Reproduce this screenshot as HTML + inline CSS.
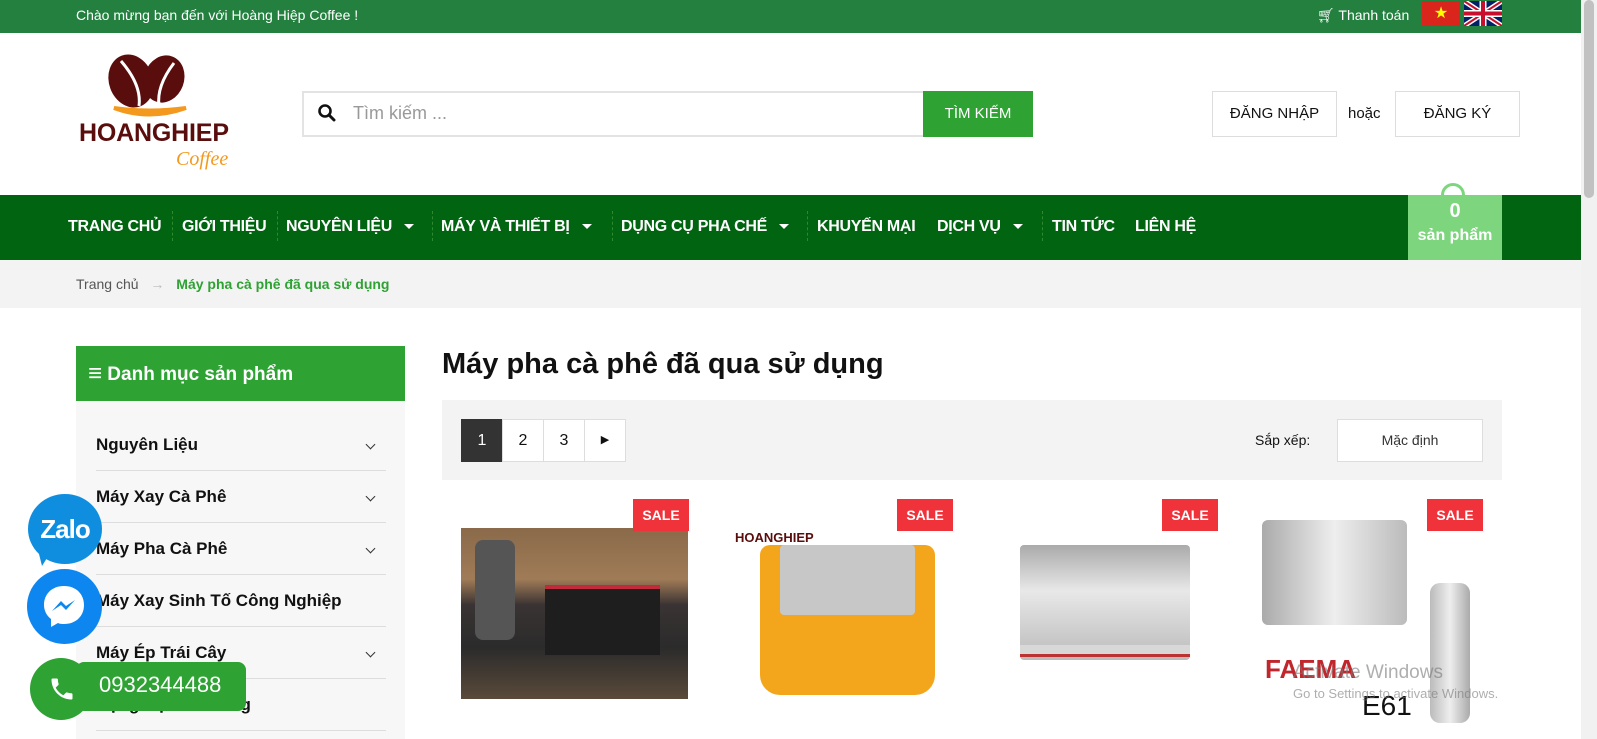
<!DOCTYPE html>
<html><head><meta charset="utf-8"><style>
*{margin:0;padding:0;box-sizing:border-box}
body{width:1597px;height:739px;overflow:hidden;position:relative;background:#fff;font-family:"Liberation Sans",Arial,sans-serif;color:#111}
.a{position:absolute}
.nav span{position:absolute;top:218px;color:#fff;font-weight:bold;font-size:16px;white-space:nowrap;letter-spacing:-0.3px}
.sep{position:absolute;top:211px;height:30px;border-left:1px dashed #2f8a2f}
.car{display:inline-block;width:0;height:0;border-left:5px solid transparent;border-right:5px solid transparent;border-top:5px solid #fff;margin-left:12px;vertical-align:middle}
.side div.it{position:absolute;left:96px;width:290px;height:52px;border-bottom:1px solid #ddd;font-weight:bold;font-size:17px;line-height:52px}
.chev{position:absolute;right:12px;top:22px;width:7px;height:7px;border-right:1.5px solid #333;border-bottom:1.5px solid #333;transform:rotate(45deg)}
.pg{position:absolute;top:419px;width:42px;height:43px;border:1px solid #ddd;background:#fff;text-align:center;line-height:41px;font-size:16px}
.sale{position:absolute;top:499px;width:56px;height:32px;background:#f0333a;color:#fff;font-weight:bold;font-size:14px;text-align:center;line-height:32px}
</style></head><body>
<div class="a" style="left:0;top:0;width:1581px;height:33px;background:#23803f"></div>
<div class="a" style="left:76px;top:7px;color:#fff;font-size:14px">Chào mừng bạn đến với Hoàng Hiệp Coffee !</div>
<div class="a" style="left:1317px;top:7px;color:#fff;font-size:14px">&#128722;&#xFE0E; Thanh toán</div>
<div class="a" style="left:1422px;top:1px;width:38px;height:25px;background:#da251d;color:#ff0;text-align:center;font-size:16px;line-height:25px">★</div>
<svg class="a" style="left:1464px;top:1px" width="38" height="25" viewBox="0 0 38 25"><rect width="38" height="25" fill="#012169"/><path d="M0 0L38 25M38 0L0 25" stroke="#fff" stroke-width="5"/><path d="M0 0L38 25M38 0L0 25" stroke="#c8102e" stroke-width="2"/><path d="M19 0V25M0 12.5H38" stroke="#fff" stroke-width="7"/><path d="M19 0V25M0 12.5H38" stroke="#c8102e" stroke-width="4"/></svg>
<div class="a" style="left:1581px;top:0;width:16px;height:739px;background:#f1f1f1"></div>
<div class="a" style="left:1584px;top:0;width:10px;height:198px;background:#c1c1c1;border-radius:5px"></div>
<svg class="a" style="left:79px;top:51px" width="155" height="122" viewBox="0 0 155 122">
<ellipse cx="52" cy="30" rx="22" ry="27" fill="#5a0d0d" transform="rotate(-20 52 30)"/>
<ellipse cx="85" cy="28" rx="20" ry="24" fill="#5a0d0d" transform="rotate(20 85 28)"/>
<path d="M42 10C55 25 62 40 60 55" stroke="#fff" stroke-width="3" fill="none"/>
<path d="M95 12C85 25 78 40 80 55" stroke="#fff" stroke-width="3" fill="none"/>
<path d="M35 57Q70 70 107 57Q70 62 35 57Z" fill="#f39a1e" stroke="#f39a1e" stroke-width="4"/>
<text x="0" y="90" font-family="Liberation Sans" font-weight="bold" font-size="25" fill="#5a0d0d" textLength="150">HOANGHIEP</text>
<text x="97" y="114" font-family="Liberation Serif" font-style="italic" font-size="20" fill="#f39a1e">Coffee</text>
</svg>
<div class="a" style="left:302px;top:91px;width:731px;height:46px;border:2px solid #e3e3e3;background:#fff"></div>
<svg class="a" style="left:318px;top:104px" width="18" height="18" viewBox="0 0 18 18"><circle cx="7" cy="7" r="5.5" stroke="#111" stroke-width="2.6" fill="none"/><path d="M11 11L16 16" stroke="#111" stroke-width="3" stroke-linecap="round"/></svg>
<div class="a" style="left:353px;top:103px;font-size:18px;color:#999">Tìm kiếm ...</div>
<div class="a" style="left:923px;top:91px;width:110px;height:46px;background:#2ea233;color:#fff;font-size:15px;text-align:center;line-height:46px">TÌM KIẾM</div>
<div class="a" style="left:1212px;top:91px;width:125px;height:46px;border:1px solid #ddd;text-align:center;line-height:44px;font-size:15px">ĐĂNG NHẬP</div>
<div class="a" style="left:1348px;top:105px;font-size:15px">hoặc</div>
<div class="a" style="left:1395px;top:91px;width:125px;height:46px;border:1px solid #ddd;text-align:center;line-height:44px;font-size:15px">ĐĂNG KÝ</div>
<div class="a" style="left:0;top:195px;width:1581px;height:65px;background:#006410"></div>
<div class="nav">
<span style="left:68px">TRANG CHỦ</span><div class="sep" style="left:172px"></div>
<span style="left:182px">GIỚI THIỆU</span><div class="sep" style="left:277px"></div>
<span style="left:286px">NGUYÊN LIỆU<i class="car"></i></span><div class="sep" style="left:432px"></div>
<span style="left:441px">MÁY VÀ THIẾT BỊ<i class="car"></i></span><div class="sep" style="left:612px"></div>
<span style="left:621px">DỤNG CỤ PHA CHẾ<i class="car"></i></span><div class="sep" style="left:807px"></div>
<span style="left:817px">KHUYẾN MẠI</span>
<span style="left:937px">DỊCH VỤ<i class="car"></i></span><div class="sep" style="left:1042px"></div>
<span style="left:1052px">TIN TỨC</span>
<span style="left:1135px">LIÊN HỆ</span>
</div>
<div class="a" style="left:1441px;top:183px;width:24px;height:24px;border:3px solid #7dd67d;border-radius:50%"></div>
<div class="a" style="left:1408px;top:195px;width:94px;height:65px;background:#7dd67d;color:#fff;text-align:center;font-weight:bold"><div style="font-size:20px;margin-top:5px">0</div><div style="font-size:16px;margin-top:4px">sản phẩm</div></div>
<div class="a" style="left:0;top:260px;width:1581px;height:48px;background:#f3f3f3"></div>
<div class="a" style="left:76px;top:276px;font-size:14px;color:#555">Trang chủ <span style="color:#bbb;margin:0 8px">→</span> <b style="color:#2ea233">Máy pha cà phê đã qua sử dụng</b></div>
<div class="a" style="left:76px;top:346px;width:329px;height:55px;background:#2ea233;color:#fff;font-weight:bold;font-size:19px;line-height:55px;padding-left:12px"><span style="font-size:24px;vertical-align:-1px">&#8801;</span> Danh mục sản phẩm</div>
<div class="a" style="left:76px;top:401px;width:329px;height:338px;background:#f7f7f7"></div>
<div class="side">
<div class="it" style="top:419px">Nguyên Liệu<span class="chev"></span></div>
<div class="it" style="top:471px">Máy Xay Cà Phê<span class="chev"></span></div>
<div class="it" style="top:523px">Máy Pha Cà Phê<span class="chev"></span></div>
<div class="it" style="top:575px">Máy Xay Sinh Tố Công Nghiệp</div>
<div class="it" style="top:627px">Máy Ép Trái Cây<span class="chev"></span></div>
<div class="it" style="top:679px">Dụng Cụ Pha Đồng</div>
</div>
<div class="a" style="left:442px;top:348px;font-size:29px;font-weight:bold">Máy pha cà phê đã qua sử dụng</div>
<div class="a" style="left:442px;top:400px;width:1060px;height:80px;background:#f3f3f3"></div>
<div class="pg" style="left:461px;background:#333;color:#fff;border-color:#333">1</div>
<div class="pg" style="left:502px">2</div>
<div class="pg" style="left:543px">3</div>
<div class="pg" style="left:584px;font-size:11px">&#9654;</div>
<div class="a" style="left:1255px;top:432px;font-size:14px">Sắp xếp:</div>
<div class="a" style="left:1337px;top:419px;width:146px;height:43px;border:1px solid #ddd;background:#fff;text-align:center;line-height:41px;font-size:14px;color:#333">Mặc định</div>
<div class="a" style="left:461px;top:528px;width:227px;height:171px;background:linear-gradient(180deg,#8a6a4a 0%,#a07b57 30%,#3a3333 45%,#2b2b2b 70%,#5a4a3a 100%)"></div>
<div class="a" style="left:545px;top:585px;width:115px;height:70px;background:#1e1e1e;border-top:4px solid #c02a3a"></div>
<div class="a" style="left:475px;top:540px;width:40px;height:100px;background:#555;border-radius:8px"></div>
<div class="a" style="left:760px;top:545px;width:175px;height:150px;background:#f3a61b;border-radius:10px 10px 20px 20px"></div>
<div class="a" style="left:780px;top:545px;width:135px;height:70px;background:#c7c7c7;border-radius:4px"></div>
<div class="a" style="left:735px;top:530px;font-size:13px;font-weight:bold;color:#5a0d0d">HOANGHIEP</div>
<div class="a" style="left:1020px;top:545px;width:170px;height:115px;background:linear-gradient(180deg,#aaa,#e8e8e8 40%,#bbb);border-radius:4px"></div>
<div class="a" style="left:1020px;top:645px;width:170px;height:12px;background:#d8d8d8;border-bottom:3px solid #b33"></div>
<div class="a" style="left:1262px;top:520px;width:145px;height:105px;background:linear-gradient(90deg,#aaa,#eee 50%,#bbb);border-radius:6px"></div>
<div class="a" style="left:1265px;top:654px;font-size:26px;font-weight:bold;color:#c0262c">FAEMA</div>
<div class="a" style="left:1430px;top:583px;width:40px;height:140px;background:linear-gradient(90deg,#bbb,#eee,#aaa);border-radius:10px"></div>
<div class="a" style="left:1362px;top:690px;font-size:28px;color:#111">E61</div>
<div class="sale" style="left:633px">SALE</div>
<div class="sale" style="left:897px">SALE</div>
<div class="sale" style="left:1162px">SALE</div>
<div class="sale" style="left:1427px">SALE</div>
<div class="a" style="left:1293px;top:662px;font-size:19px;color:rgba(120,120,120,0.6)">Activate Windows</div>
<div class="a" style="left:1293px;top:686px;font-size:13px;color:rgba(120,120,120,0.6)">Go to Settings to activate Windows.</div>
<div class="a" style="left:28px;top:494px;width:74px;height:70px;background:#0f8ee0;border-radius:50%;color:#fff;font-weight:bold;font-size:26px;text-align:center;line-height:70px;letter-spacing:-1px">Zalo</div>
<div class="a" style="left:38px;top:550px;width:0;height:0;border-left:4px solid transparent;border-right:10px solid transparent;border-top:16px solid #0f8ee0"></div>
<div class="a" style="left:27px;top:569px;width:75px;height:75px;background:#0e86f0;border-radius:50%"></div>
<svg class="a" style="left:42px;top:584px" width="45" height="45" viewBox="0 0 45 45"><path d="M22 2C10 2 2 10 2 21c0 6 3 11 7 14v8l7-4c2 1 4 1 6 1 12 0 20-8 20-19S34 2 22 2z" fill="#fff"/><path d="M10 27l9-10 5 5 9-6-9 10-5-5z" fill="#0e86f0"/></svg>
<div class="a" style="left:76px;top:662px;width:170px;height:49px;background:#2ea233;border-radius:8px"></div>
<div class="a" style="left:30px;top:658px;width:62px;height:62px;background:#2ea233;border-radius:50%"></div>
<svg class="a" style="left:48px;top:675px" width="28" height="28" viewBox="0 0 24 24"><path d="M6.6 10.8c1.4 2.8 3.8 5.1 6.6 6.6l2.2-2.2c.3-.3.7-.4 1-.2 1.1.4 2.3.6 3.6.6.6 0 1 .4 1 1V20c0 .6-.4 1-1 1C10.6 21 3 13.4 3 4c0-.6.4-1 1-1h3.5c.6 0 1 .4 1 1 0 1.3.2 2.5.6 3.6.1.3 0 .7-.2 1z" fill="#fff"/></svg>
<div class="a" style="left:99px;top:672px;color:#fff;font-size:22px">0932344488</div>
</body></html>
